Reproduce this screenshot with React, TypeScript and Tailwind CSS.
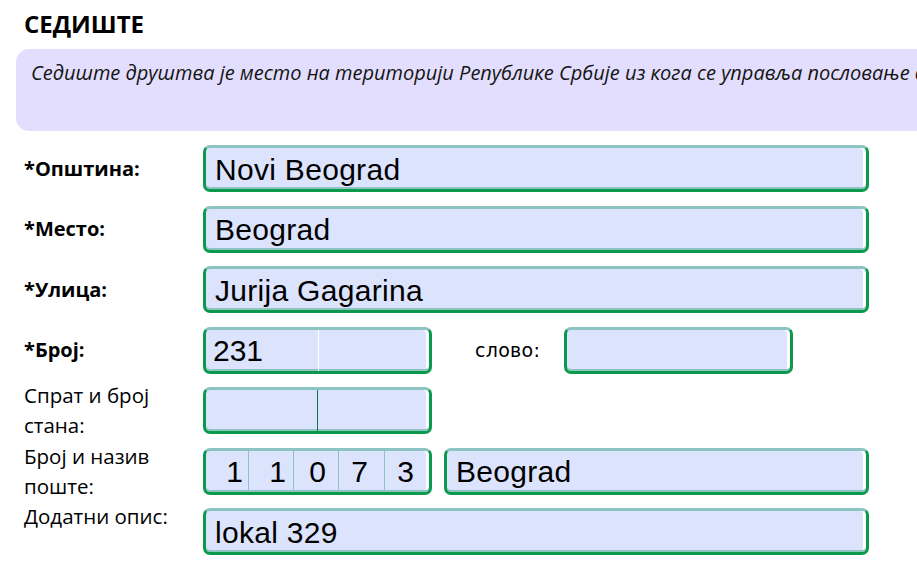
import React from "react"

const box =
  "flex h-[47px] items-center overflow-hidden rounded-[7px] border-[3px] border-[#0b9a4c] border-t-[#8dc3c1] bg-[#dce3fd] shadow-[inset_0_-2px_0_#8dc3c1,inset_-3px_0_0_#fff]"
const value = "font-['Liberation_Sans',Arial,sans-serif] text-[30px] leading-none text-black"

interface FieldProps {
  text?: string
  className?: string
}

const Field = function ({ text, className = "" }: FieldProps): JSX.Element {
  return (
    <div className={`${box} ${className}`}>
      <span className={`${value} pl-[9px] pt-[2px] tracking-[0.3px]`}>{text}</span>
    </div>
  )
}

interface RowProps {
  label: React.ReactNode
  bold?: boolean
  children: React.ReactNode
}

const Row = function ({ label, bold, children }: RowProps): JSX.Element {
  return (
    <div className="flex h-[47px] items-start">
      <div
        className={`w-[203px] shrink-0 pl-6 leading-[30px] text-black ${
          bold ? "self-center text-[20px] font-bold" : "-mt-[7px] text-[20.5px]"
        }`}
      >
        {label}
      </div>
      {children}
    </div>
  )
}

// per-cell widths and nudges, the digits in the reference are not exactly centred
const postal = [
  { d: "1", cls: "w-[43px] pl-[15px]" },
  { d: "1", cls: "w-[45px] pl-[13px]" },
  { d: "0", cls: "w-[45px] pl-[3px]" },
  { d: "7", cls: "w-[46px] pr-[4px]" },
  { d: "3", cls: "flex-1 pr-[3px]" },
]

export default function App(): JSX.Element {
  return (
    <div className="h-[585px] w-[917px] overflow-hidden bg-white font-['Open_Sans','Noto_Sans',sans-serif]">
      <h1 className="pl-6 pt-[8px] text-[24px] font-bold leading-[32px] text-black">СЕДИШТЕ</h1>
      <div className="ml-4 mt-[9px] h-[82px] w-[940px] rounded-[13px] bg-[#e3defd] pl-[15px] pt-[10px]">
        <p className="whitespace-nowrap text-[20px] italic leading-[28px] text-[#141414]">
          Седиште друштва је место на територији Републике Србије из кога се управља пословање друштва.
        </p>
      </div>
      <div className="mt-[14px] flex flex-col gap-[13.5px]">
        <Row label="*Општина:" bold>
          <Field text="Novi Beograd" className="w-[666px]" />
        </Row>
        <Row label="*Место:" bold>
          <Field text="Beograd" className="w-[666px]" />
        </Row>
        <Row label="*Улица:" bold>
          <Field text="Jurija Gagarina" className="w-[666px]" />
        </Row>
        <Row label="*Број:" bold>
          <div className={`${box} w-[229px] items-stretch`}>
            <div className="flex w-[113px] items-center border-r border-white">
              <span className={`${value} pl-[7px] pt-[2px]`}>231</span>
            </div>
          </div>
          <span className="ml-[43px] self-center font-['DejaVu_Sans',sans-serif] text-[19px] tracking-[0.3px] text-black">
            слово:
          </span>
          <div className={`${box} ml-auto mr-[124px] w-[229px]`} />
        </Row>
        <Row
          label={
            <>
              Спрат и број
              <br />
              стана:
            </>
          }
        >
          <div className={`${box} w-[229px] items-stretch`}>
            <div className="w-[112px] border-r border-[#0b7a3c]" />
          </div>
        </Row>
        <Row
          label={
            <>
              Број и назив
              <br />
              поште:
            </>
          }
        >
          <div className={`${box} w-[229px] items-stretch`}>
            {postal.map((p, i) => (
              <div
                key={i}
                className={`flex shrink-0 items-center justify-center pt-[2px] ${p.cls} ${
                  i < postal.length - 1 ? "border-r border-[#8dc3c1]" : ""
                }`}
              >
                <span className={value}>{p.d}</span>
              </div>
            ))}
          </div>
          <Field text="Beograd" className="ml-[12px] w-[425px]" />
        </Row>
        <Row label="Додатни опис:">
          <Field text="lokal 329" className="w-[666px]" />
        </Row>
      </div>
    </div>
  )
}
